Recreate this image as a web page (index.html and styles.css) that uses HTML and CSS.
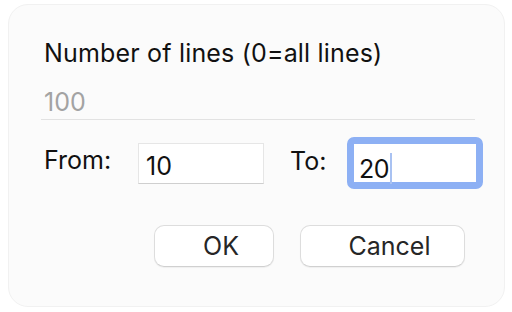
FILE: index.html
```html
<!DOCTYPE html>
<html lang="en">
<head>
<meta charset="utf-8">
<title>Number of lines</title>
<link rel="stylesheet" href="styles.css">
</head>
<body>
<div class="dialog">
  <div class="title">Number of lines (0=all lines)</div>
  <div class="line-field">100</div>
  <div class="range-row">
    <div class="label from-label">From:</div>
    <div class="field">10</div>
    <div class="label to-label">To:</div>
    <div class="field focused">20<span class="caret"></span></div>
  </div>
  <div class="button-row">
    <div class="btn ok">OK</div>
    <div class="btn cancel">Cancel</div>
  </div>
</div>
</body>
</html>
```
FILE: styles.css
```css
html, body {
  margin: 0;
  padding: 0;
  background: #ffffff;
}
body {
  font-family: "Inter", "Liberation Sans", sans-serif;
  font-size: 25px;
  line-height: 30px;
  color: #111111;
}
.dialog {
  box-sizing: border-box;
  margin: 4px 7px 0 8px;
  height: 303px;
  border: 1px solid #f1f1f1;
  border-radius: 20px;
  background: #fbfbfb;
  padding: 33px 20px 0 35px;
}
.title {
  height: 30px;
  letter-spacing: 0.18px;
}
.line-field {
  margin-top: 19px;
  margin-left: -3px;
  padding: 0 0 2px 3px;
  width: 431px;
  height: 30px;
  color: #a3a3a3;
  border-bottom: 1px solid #e2e2e2;
}
.range-row {
  display: flex;
  align-items: flex-start;
  margin-top: 17px;
}
.label {
  flex: none;
}
.from-label {
  width: 94px;
  margin-top: 8px;
}
.to-label {
  width: 57px;
  margin-top: 9px;
  margin-left: 26px;
}
.field {
  flex: none;
  box-sizing: border-box;
  width: 126px;
  height: 41px;
  margin-top: 6px;
  padding: 7px 0 0 7px;
  background: #ffffff;
  border: 1px solid #e6e6e6;
  border-bottom-color: #cfcfcf;
}
.field.focused {
  width: 136px;
  height: 52px;
  margin-top: 0;
  border: 7px solid #8db0f4;
  border-radius: 7px;
  padding: 9px 0 0 5px;
  line-height: 28px;
  letter-spacing: -0.5px;
}
.caret {
  display: inline-block;
  width: 2px;
  height: 31px;
  margin-left: 1px;
  vertical-align: -6px;
  background: #a9c2f2;
}
.button-row {
  display: flex;
  gap: 26px;
  margin-top: 36px;
  padding-left: 110px;
}
.btn {
  box-sizing: border-box;
  height: 42px;
  line-height: 40px;
  padding-left: 14px;
  text-align: center;
  color: #262626;
  background: #ffffff;
  border: 1px solid #dddddd;
  border-bottom-color: #d0d0d0;
  border-radius: 10px;
  box-shadow: 0 1px 1px rgba(0, 0, 0, 0.05);
}
.ok {
  width: 120px;
}
.cancel {
  width: 165px;
}
```
